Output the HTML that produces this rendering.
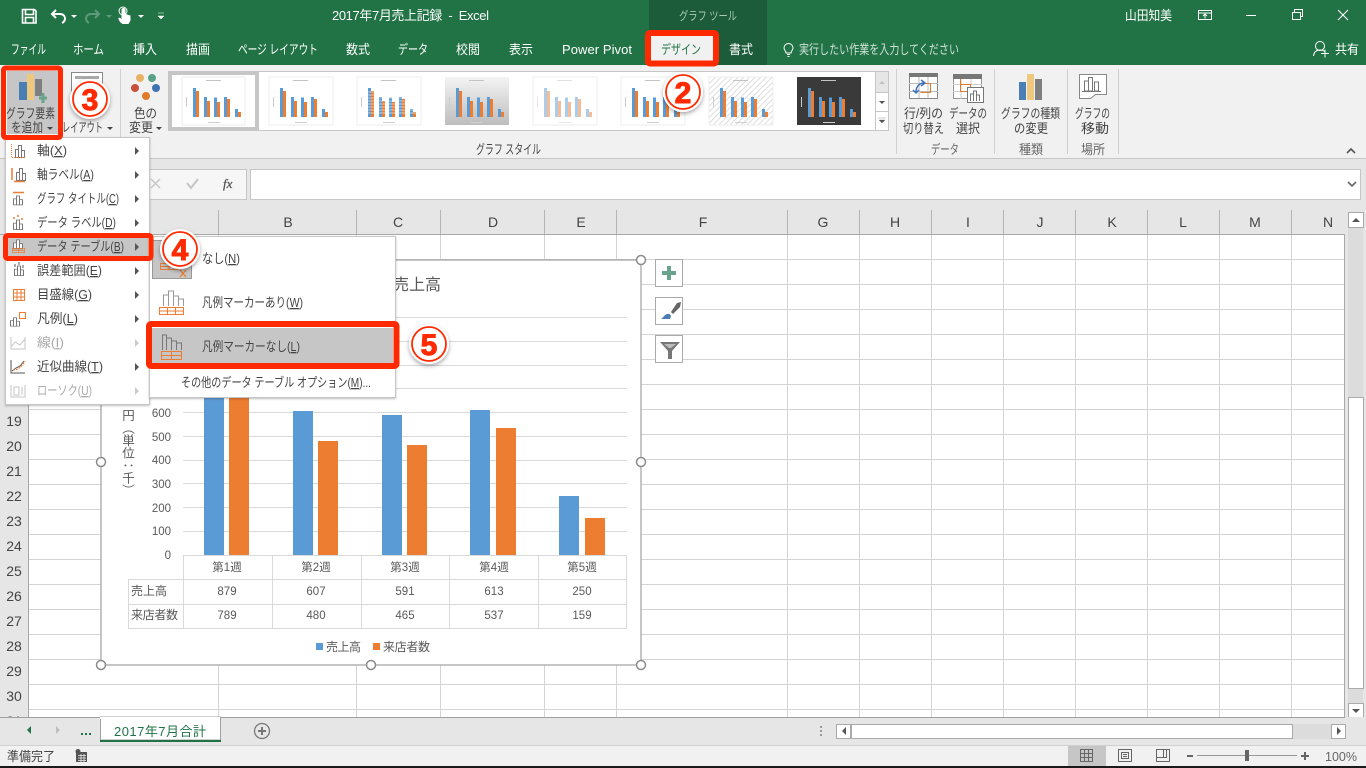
<!DOCTYPE html>
<html lang="ja"><head><meta charset="utf-8"><title>2017年7月売上記録 - Excel</title>
<style>
html,body{margin:0;padding:0;background:#fff;overflow:hidden}
svg{display:block;font-family:"Liberation Sans","Noto Sans CJK JP",sans-serif;font-size:13px}
.l{fill:#d4d4d4}
.t{fill:#444}
.w{fill:#fff}
.h{fill:#444;font-size:14px;text-anchor:middle}
.r{fill:#444;font-size:14px;text-anchor:middle}
.a{fill:#595959;font-size:11.500px;text-anchor:end}
.c{fill:#595959;font-size:11.500px;text-anchor:middle}
.d{fill:#aaa}
.u{text-decoration:underline}
</style></head><body>
<svg width="1366" height="768" viewBox="0 0 1366 768" xmlns="http://www.w3.org/2000/svg">
<defs>
<filter id="sh" x="-30%" y="-30%" width="160%" height="160%"><feDropShadow dx="0" dy="2" stdDeviation="2" flood-color="#000" flood-opacity=".35"/></filter>
<filter id="ms" x="-5%" y="-5%" width="110%" height="110%"><feDropShadow dx="0" dy="1" stdDeviation="1" flood-color="#000" flood-opacity=".25"/></filter>
<pattern id="hatch" width="4" height="4" patternUnits="userSpaceOnUse" patternTransform="rotate(45)"><rect width="1" height="4" fill="#ddd"/></pattern>
<linearGradient id="gr" x1="0" y1="0" x2="0" y2="1"><stop offset="0" stop-color="#f4f4f4"/><stop offset="1" stop-color="#bdbdbd"/></linearGradient>
<symbol id="bars" width="64" height="48" overflow="visible">
<g fill="#5b9bd5"><rect x="11" y="11" width="3" height="29"/><rect x="22" y="20" width="3" height="20"/><rect x="32" y="20.500" width="3" height="19.500"/><rect x="42" y="20" width="3" height="20"/><rect x="53" y="32" width="3" height="8"/></g>
<g fill="#ed7d31"><rect x="14" y="14" width="3" height="26"/><rect x="25" y="24" width="3" height="16"/><rect x="35" y="25" width="3" height="15"/><rect x="45" y="22" width="3" height="18"/><rect x="56" y="35" width="3" height="5"/></g>
<rect x="24" y="3" width="15" height="1" fill="#c4c4c4"/><rect x="26" y="45" width="12" height="1" fill="#d0d0d0"/>
<rect x="4" y="20" width="1" height="10" fill="#ccc"/>
</symbol>
<symbol id="mb" width="12" height="16" overflow="visible"><g fill="#fff" stroke="#777"><rect x=".5" y="6.500" width="3" height="8"/><rect x="3.500" y="2.500" width="3" height="12"/><rect x="6.500" y="7.500" width="3" height="7"/></g></symbol>
<symbol id="dt" width="18" height="7" overflow="visible"><g fill="none" stroke="#ed7d31"><rect x=".5" y=".5" width="17" height="6"/><path d="M0 3.500h18M9 .5v6"/></g></symbol>
</defs>

<!-- title bar -->
<rect width="1366" height="65" fill="#217346"/>
<rect x="649" width="118" height="65" fill="#1c5c3a"/>
<!-- QAT -->
<path d="M22.500 9.500h12l1.500 1.500v12h-13.500zM25.500 9.500v5h8v-5M25.500 23v-5.500h8V23" fill="none" stroke="#fff" stroke-width="1.600"/>
<path d="M56 10l-4 4 4 4M52 14h8c4 0 5 3 5 4.500s-1 3.500-3 4.500" fill="none" stroke="#fff" stroke-width="2"/>
<path d="M71 15h6l-3 3z" fill="#fff"/>
<path d="M95 10l4 4-4 4M99 14h-8c-4 0-5 3-5 4.500s1 3.500 3 4.500" fill="none" stroke="#5f9a7a" stroke-width="2"/>
<path d="M106 15h6l-3 3z" fill="#5f9a7a"/>
<path d="M120 22c-1-2-2-3-1.500-4s2 0 3 1v-9a2 2 0 0 1 4 0v4l5 1.500v5l-2 3.500h-6z" fill="#fff"/><circle cx="123" cy="11" r="4" fill="none" stroke="#fff"/>
<path d="M138 15h6l-3 3z" fill="#fff"/>
<path d="M158 13h6M158 16h6l-3 3z" fill="#fff" stroke="#fff" stroke-width=".5"/>

<text x="332" y="20" class="w" textLength="157">2017年7月売上記録&#160;&#160;-&#160;&#160;Excel</text>
<text x="679" y="20" fill="#a9c9b6" font-size="12" textLength="58" lengthAdjust="spacingAndGlyphs">グラフ ツール</text>
<text x="1125" y="20" class="w" textLength="47" lengthAdjust="spacingAndGlyphs">山田知美</text>
<!-- window controls -->
<path d="M1198.500 10.500h13v9h-13zM1198.500 13h13M1205 18.500v-4M1203 16l2-2 2 2" fill="none" stroke="#fff"/>
<path d="M1246 15.500h10" stroke="#fff"/>
<path d="M1292.500 12.500h8v7h-8zM1294.500 12v-2.500h8v7h-2" fill="none" stroke="#fff"/>
<path d="M1338 10l10 10M1348 10l-10 10" stroke="#fff" stroke-width="1.100"/>

<!-- tabs -->
<g class="w">
<text x="11" y="54" textLength="35" lengthAdjust="spacingAndGlyphs">ファイル</text>
<text x="73" y="54" textLength="31" lengthAdjust="spacingAndGlyphs">ホーム</text>
<text x="133" y="54" textLength="24" lengthAdjust="spacingAndGlyphs">挿入</text>
<text x="186" y="54" textLength="24" lengthAdjust="spacingAndGlyphs">描画</text>
<text x="238" y="54" textLength="80" lengthAdjust="spacingAndGlyphs">ページ レイアウト</text>
<text x="346" y="54" textLength="24" lengthAdjust="spacingAndGlyphs">数式</text>
<text x="398" y="54" textLength="30" lengthAdjust="spacingAndGlyphs">データ</text>
<text x="456" y="54" textLength="24" lengthAdjust="spacingAndGlyphs">校閲</text>
<text x="509" y="54" textLength="24" lengthAdjust="spacingAndGlyphs">表示</text>
<text x="562" y="54" textLength="70">Power Pivot</text>
<text x="729" y="54" textLength="24" lengthAdjust="spacingAndGlyphs">書式</text>
<text x="1335" y="54" textLength="24" lengthAdjust="spacingAndGlyphs">共有</text>
</g>
<text x="799" y="54" fill="#cfe0d6" textLength="160" lengthAdjust="spacingAndGlyphs">実行したい作業を入力してください</text>
<path d="M787 54.500h3M787.500 56.500h2M786 53c0-2-2-3-2-5a4.500 4.500 0 0 1 9 0c0 2-2 3-2 5z" fill="none" stroke="#fff"/>
<circle cx="1320" cy="46" r="4.500" fill="none" stroke="#fff"/><path d="M1313.500 56c.5-4 3-6 6.500-6s4 1 5 2M1321 53.500h8M1325 49.500v8" fill="none" stroke="#fff"/>

<!-- ribbon -->
<rect y="65" width="1366" height="93" fill="#f1f1f1"/>
<rect y="158" width="1366" height="1" fill="#c6c6c6"/>
<rect x="651" y="36" width="62" height="29" fill="#f1f1f1"/>
<text x="661" y="54" fill="#217346" textLength="40" lengthAdjust="spacingAndGlyphs">デザイン</text>

<!-- button 1 -->
<rect x="7" y="71" width="51" height="63" fill="#c6c6c6"/>
<rect x="19" y="82" width="8" height="18" fill="#4a7fb5"/>
<rect x="27" y="74" width="7" height="26" fill="#efc87f"/>
<rect x="35" y="79" width="7" height="17" fill="#7f7f7f"/>
<path d="M39 98h8M43 93v10" stroke="#6aa38c" stroke-width="3"/>
<text x="6" y="118" class="t" textLength="49" lengthAdjust="spacingAndGlyphs">グラフ要素</text>
<text x="11" y="132" class="t" textLength="32" lengthAdjust="spacingAndGlyphs">を追加</text>
<path d="M47 127h6l-3 3z" fill="#444"/>
<!-- button 2 -->
<rect x="71.500" y="72.500" width="31" height="30" fill="#fff" stroke="#888"/><rect x="75" y="76" width="24" height="3" fill="#aaa"/>
<text x="62" y="132" class="t" textLength="41" lengthAdjust="spacingAndGlyphs">レイアウト</text>
<path d="M107 127h6l-3 3z" fill="#444"/>
<rect x="120" y="69" width="1" height="85" fill="#d0d0d0"/>
<!-- colors -->
<circle cx="140" cy="78" r="4" fill="#e9b264"/><circle cx="152" cy="78" r="4" fill="#5ba08a"/><circle cx="135" cy="88" r="4" fill="#c9503a"/><circle cx="156" cy="88" r="4" fill="#3f72b5"/><circle cx="146" cy="96" r="4" fill="#e07b28"/>
<text x="134" y="118" class="t" textLength="23" lengthAdjust="spacingAndGlyphs">色の</text>
<text x="129" y="132" class="t" textLength="24" lengthAdjust="spacingAndGlyphs">変更</text>
<path d="M156 127h6l-3 3z" fill="#444"/>

<!-- gallery -->
<rect x="168.500" y="71.500" width="707" height="59" fill="#fff" stroke="#c6c6c6"/>
<rect x="170" y="73" width="87" height="56" fill="#fff" stroke="#c6c6c6" stroke-width="4"/>
<g stroke="#eee" fill="#fff"><rect x="182" y="77" width="63" height="48"/><rect x="269" y="77" width="64" height="48"/><rect x="357" y="77" width="64" height="48"/><rect x="533" y="77" width="64" height="48"/><rect x="621" y="77" width="64" height="48"/></g>
<use href="#bars" x="182" y="77"/>
<use href="#bars" x="269" y="77"/>
<use href="#bars" x="357" y="77"/>
<g stroke="#fff" stroke-width=".7" opacity=".7"><path d="M367 92h50M367 95h50M367 98h50M367 101h50M367 104h50M367 107h50M367 110h50M367 113h50"/></g>
<rect x="445" y="77" width="64" height="48" fill="url(#gr)"/>
<use href="#bars" x="445" y="77"/>
<use href="#bars" x="533" y="77" opacity=".5"/>
<use href="#bars" x="621" y="77"/>
<rect x="709" y="77" width="64" height="48" fill="url(#hatch)" stroke="#eee"/>
<use href="#bars" x="709" y="77"/>
<rect x="797" y="77" width="64" height="48" fill="#3a3a3a"/>
<use href="#bars" x="797" y="77"/>
<rect x="875.500" y="71.500" width="13" height="21" fill="#e6e6e6" stroke="#c6c6c6"/>
<rect x="875.500" y="92.500" width="13" height="19" fill="#fff" stroke="#c6c6c6"/>
<rect x="875.500" y="111.500" width="13" height="19" fill="#fff" stroke="#c6c6c6"/>
<path d="M879 84l3-3 3 3z" fill="#c0c0c0"/><path d="M879 101h6l-3 3z" fill="#555"/><path d="M878 118h8M879 120h6l-3 3z" fill="#555" stroke="#555" stroke-width=".3"/>
<text x="476" y="154" class="t" textLength="65" lengthAdjust="spacingAndGlyphs">グラフ スタイル</text>

<g fill="#d0d0d0"><rect x="896" y="69" width="1" height="85"/><rect x="994" y="69" width="1" height="85"/><rect x="1067" y="69" width="1" height="85"/><rect x="1118" y="69" width="1" height="85"/></g>

<!-- data icons -->
<rect x="909.500" y="73.500" width="28" height="25" fill="#fff" stroke="#888"/><rect x="909" y="73" width="29" height="4" fill="#777"/>
<path d="M909 83.500h29M909 91.500h29M919 77v21M928 77v21" stroke="#bbb" fill="none"/>
<path d="M920.500 83.500h10v9h-10" fill="none" stroke="#e07b28"/>
<path d="M916 92c0-5 3-9 8-9M921 80l4 3-4 3M913 90l3 3 3-3" fill="none" stroke="#3f72b5" stroke-width="1.500"/>
<rect x="953.500" y="74.500" width="28" height="24" fill="#fff" stroke="#999"/><rect x="953" y="74" width="29" height="5" fill="#777"/>
<path d="M953 84.500h29M953 91.500h29M961 79v20M971 79v20" stroke="#ccc" fill="none"/>
<path d="M960.500 79v12.500h10v-7h-10" fill="none" stroke="#e07b28"/>
<rect x="967.500" y="87.500" width="16" height="15" fill="#fff" stroke="#777"/>
<path d="M970.500 101v-7h3v7M973.500 101v-10h3v10M976.500 101v-6h3v6" fill="none" stroke="#777"/>
<rect x="1019" y="82" width="7" height="18" fill="#4a7fb5"/><rect x="1027" y="74" width="7" height="26" fill="#efc87f"/><rect x="1035" y="79" width="7" height="21" fill="#7f7f7f"/>
<path d="M1079.500 74.500h27v20h-11l-5 4h-11z" fill="#fff" stroke="#888"/>
<path d="M1084.500 91v-10h4v10zM1088.500 91V77.500h4V91zM1094.500 91v-9h4v9zM1082 91.500h19" fill="none" stroke="#777"/>

<g class="t">
<text x="904" y="118" textLength="39" lengthAdjust="spacingAndGlyphs">行/列の</text>
<text x="903" y="133" textLength="41" lengthAdjust="spacingAndGlyphs">切り替え</text>
<text x="949" y="118" textLength="38" lengthAdjust="spacingAndGlyphs">データの</text>
<text x="956" y="133" textLength="24" lengthAdjust="spacingAndGlyphs">選択</text>
<text x="1001" y="118" textLength="59" lengthAdjust="spacingAndGlyphs">グラフの種類</text>
<text x="1014" y="133" textLength="34" lengthAdjust="spacingAndGlyphs">の変更</text>
<text x="1075" y="118" textLength="35" lengthAdjust="spacingAndGlyphs">グラフの</text>
<text x="1081" y="133" textLength="28" lengthAdjust="spacingAndGlyphs">移動</text>
<text x="931" y="154" textLength="28" lengthAdjust="spacingAndGlyphs" fill="#666">データ</text>
<text x="1019" y="154" textLength="24" lengthAdjust="spacingAndGlyphs" fill="#666">種類</text>
<text x="1081" y="154" textLength="24" lengthAdjust="spacingAndGlyphs" fill="#666">場所</text>
</g>
<path d="M1347 153l4-4 4 4" fill="none" stroke="#555" stroke-width="1.600"/>

<!-- formula bar -->
<rect y="159" width="1366" height="51" fill="#e6e6e6"/>
<rect x="120.500" y="169.500" width="126" height="30" fill="#f6f6f6" stroke="#c6c6c6"/>
<rect x="250.500" y="169.500" width="1110" height="30" fill="#fff" stroke="#c6c6c6"/>
<path d="M151 179l9 9M160 179l-9 9" stroke="#c6c6c6" stroke-width="1.500"/>
<path d="M187 183l4 5 7-9" fill="none" stroke="#c6c6c6" stroke-width="2"/>
<text x="223" y="188" font-family="Liberation Serif" font-style="italic" font-size="13" fill="#555" stroke="#555" stroke-width=".3">fx</text>
<path d="M1348 182l4 4 4-4" fill="none" stroke="#666" stroke-width="1.600"/>

<!-- sheet -->
<rect y="210" width="1346" height="507" fill="#fff"/>
<rect y="210" width="1345" height="24" fill="#e6e6e6"/>
<rect y="234" width="28" height="483" fill="#e6e6e6"/>
<g class="l">
<rect x="29" y="259" width="1316" height="1"/><rect x="29" y="284" width="1316" height="1"/><rect x="29" y="309" width="1316" height="1"/><rect x="29" y="334" width="1316" height="1"/><rect x="29" y="359" width="1316" height="1"/><rect x="29" y="384" width="1316" height="1"/><rect x="29" y="409" width="1316" height="1"/><rect x="29" y="434" width="1316" height="1"/><rect x="29" y="459" width="1316" height="1"/><rect x="29" y="484" width="1316" height="1"/><rect x="29" y="509" width="1316" height="1"/><rect x="29" y="534" width="1316" height="1"/><rect x="29" y="559" width="1316" height="1"/><rect x="29" y="584" width="1316" height="1"/><rect x="29" y="609" width="1316" height="1"/><rect x="29" y="634" width="1316" height="1"/><rect x="29" y="659" width="1316" height="1"/><rect x="29" y="684" width="1316" height="1"/><rect x="29" y="709" width="1316" height="1"/>
<rect x="218" y="234" width="1" height="483"/><rect x="356" y="234" width="1" height="483"/><rect x="440" y="234" width="1" height="483"/><rect x="544" y="234" width="1" height="483"/><rect x="616" y="234" width="1" height="483"/><rect x="787" y="234" width="1" height="483"/><rect x="859" y="234" width="1" height="483"/><rect x="931" y="234" width="1" height="483"/><rect x="1003" y="234" width="1" height="483"/><rect x="1075" y="234" width="1" height="483"/><rect x="1147" y="234" width="1" height="483"/><rect x="1219" y="234" width="1" height="483"/><rect x="1291" y="234" width="1" height="483"/>
</g>
<g fill="#b5b5b5">
<rect x="218" y="210" width="1" height="24"/><rect x="356" y="210" width="1" height="24"/><rect x="440" y="210" width="1" height="24"/><rect x="544" y="210" width="1" height="24"/><rect x="616" y="210" width="1" height="24"/><rect x="787" y="210" width="1" height="24"/><rect x="859" y="210" width="1" height="24"/><rect x="931" y="210" width="1" height="24"/><rect x="1003" y="210" width="1" height="24"/><rect x="1075" y="210" width="1" height="24"/><rect x="1147" y="210" width="1" height="24"/><rect x="1219" y="210" width="1" height="24"/><rect x="1291" y="210" width="1" height="24"/>
</g>
<rect y="234" width="1345" height="1" fill="#a8a8a8"/><rect x="28" y="210" width="1" height="507" fill="#a8a8a8"/><rect x="1344" y="234" width="1" height="483" fill="#a8a8a8"/>
<g class="h">
<text x="288" y="227">B</text><text x="398" y="227">C</text><text x="493" y="227">D</text><text x="581" y="227">E</text><text x="703" y="227">F</text><text x="823" y="227">G</text><text x="895" y="227">H</text><text x="968" y="227">I</text><text x="1040" y="227">J</text><text x="1112" y="227">K</text><text x="1183" y="227">L</text><text x="1255" y="227">M</text><text x="1328" y="227">N</text>
</g>
<g class="r">
<text x="14" y="426">19</text><text x="14" y="451">20</text><text x="14" y="476">21</text><text x="14" y="501">22</text><text x="14" y="526">23</text><text x="14" y="551">24</text><text x="14" y="576">25</text><text x="14" y="601">26</text><text x="14" y="626">27</text><text x="14" y="651">28</text><text x="14" y="676">29</text><text x="14" y="701">30</text><text x="14" y="726">31</text>
</g>

<!-- vertical scrollbar -->
<rect x="1345" y="210" width="21" height="507" fill="#e6e6e6"/>
<rect x="1348" y="212" width="15" height="505" fill="#dcdcdc"/>
<rect x="1348.500" y="212.500" width="15" height="15" fill="#fff" stroke="#aaa"/><path d="M1352 222l4-4 4 4z" fill="#555"/>
<rect x="1348.500" y="397.500" width="15" height="291" fill="#fff" stroke="#aaa"/>
<rect x="1348.500" y="703.500" width="15" height="14" fill="#fff" stroke="#aaa"/><path d="M1352 709h8l-4 4z" fill="#555"/>

<!-- chart -->
<rect x="101" y="260" width="540" height="405" fill="#fff" stroke="#a0a0a0" stroke-width="1.200"/>
<text x="441" y="290" text-anchor="end" font-size="16" fill="#595959">2017年7月売上高</text>
<g fill="#d9d9d9">
<rect x="183" y="317" width="444" height="1"/><rect x="183" y="341" width="444" height="1"/><rect x="183" y="365" width="444" height="1"/><rect x="183" y="388" width="444" height="1"/><rect x="183" y="412" width="444" height="1"/><rect x="183" y="436" width="444" height="1"/><rect x="183" y="460" width="444" height="1"/><rect x="183" y="483" width="444" height="1"/><rect x="183" y="507" width="444" height="1"/><rect x="183" y="531" width="444" height="1"/>
</g>
<g fill="#5b9bd5"><rect x="204" y="347" width="20" height="208"/><rect x="293" y="411" width="20" height="144"/><rect x="382" y="415" width="20" height="140"/><rect x="470" y="410" width="20" height="145"/><rect x="559" y="496" width="20" height="59"/></g>
<g fill="#ed7d31"><rect x="229" y="368" width="20" height="187"/><rect x="318" y="441" width="20" height="114"/><rect x="407" y="445" width="20" height="110"/><rect x="496" y="428" width="20" height="127"/><rect x="585" y="518" width="20" height="37"/></g>
<g class="a"><text x="171" y="417">600</text><text x="171" y="441">500</text><text x="171" y="464">400</text><text x="171" y="488">300</text><text x="171" y="512">200</text><text x="171" y="535">100</text><text x="171" y="559">0</text></g>
<text x="127" y="409" font-size="12.500" fill="#595959" style="writing-mode:vertical-rl;glyph-orientation-vertical:0">円（単位：千）</text>
<!-- data table -->
<g fill="none" stroke="#d9d9d9"><path d="M183 555.500h444M128 579.500h499M128 604.500h499M128 628.500h499M128.500 580v49M183.500 555v74M272.500 555v74M361.500 555v74M449.500 555v74M538.500 555v74M626.500 555v74"/></g>
<g class="c">
<text x="227" y="571">第1週</text><text x="316" y="571">第2週</text><text x="405" y="571">第3週</text><text x="494" y="571">第4週</text><text x="582" y="571">第5週</text>
<text x="227" y="595">879</text><text x="316" y="595">607</text><text x="405" y="595">591</text><text x="494" y="595">613</text><text x="582" y="595">250</text>
<text x="227" y="619">789</text><text x="316" y="619">480</text><text x="405" y="619">465</text><text x="494" y="619">537</text><text x="582" y="619">159</text>
</g>
<text x="131" y="595" font-size="12" fill="#595959" textLength="36">売上高</text>
<text x="131" y="619" font-size="12" fill="#595959" textLength="47">来店者数</text>
<rect x="316" y="643" width="7" height="7" fill="#5b9bd5"/><text x="326" y="651" font-size="12" fill="#595959" textLength="35">売上高</text>
<rect x="373" y="643" width="7" height="7" fill="#ed7d31"/><text x="383" y="651" font-size="12" fill="#595959" textLength="47">来店者数</text>
<g fill="#fff" stroke="#8c8c8c" stroke-width="1.500"><circle cx="641" cy="260" r="4.500"/><circle cx="101" cy="462" r="4.500"/><circle cx="641" cy="462" r="4.500"/><circle cx="101" cy="665" r="4.500"/><circle cx="371" cy="665" r="4.500"/><circle cx="641" cy="665" r="4.500"/></g>
<!-- chart side buttons -->
<g fill="#fff" stroke="#aaa"><rect x="655.500" y="259.500" width="27" height="27"/><rect x="655.500" y="297.500" width="27" height="27"/><rect x="655.500" y="335.500" width="27" height="27"/></g>
<path d="M662 273h14M669 266v14" stroke="#6aa38c" stroke-width="4"/>
<path d="M671 312l6-9 4-1-1 5-7 7z" fill="#666"/><path d="M661 319c2-1 3-4 6-5 2-1 4 1 4 2l-1 3z" fill="#4a7fb5"/>
<path d="M660 342h20l-8 9v8h-4v-8z" fill="#777"/><path d="M664 344h12l-5 4h-2z" fill="#bbb"/>

<!-- tab bar -->
<rect y="717" width="1366" height="28" fill="#e6e6e6"/>
<rect y="717" width="1345" height="1" fill="#a0a0a0"/>
<rect x="100.500" y="717" width="120" height="23" fill="#fff" stroke="#a0a0a0"/>
<rect x="100" y="717" width="120" height="2" fill="#fff"/>
<rect x="100" y="740" width="121" height="2" fill="#217346"/>
<text x="114" y="736" font-size="13" fill="#217346" textLength="92">2017年7月合計</text>
<path d="M31 726v8l-4-4z" fill="#217346"/><path d="M56 726v8l4-4z" fill="#c0c0c0"/>
<g fill="#217346"><rect x="81" y="733" width="2" height="2"/><rect x="85" y="733" width="2" height="2"/><rect x="89" y="733" width="2" height="2"/></g>
<circle cx="262" cy="731" r="7.500" fill="none" stroke="#777" stroke-width="1.300"/><path d="M258 731h8M262 727v8" stroke="#777" stroke-width="2"/>
<g fill="#999"><rect x="820" y="726" width="2" height="2"/><rect x="820" y="730" width="2" height="2"/><rect x="820" y="734" width="2" height="2"/></g>
<rect x="836" y="724" width="495" height="15" fill="#dcdcdc"/>
<rect x="836.500" y="724.500" width="14" height="14" fill="#fff" stroke="#aaa"/><path d="M846 727v8l-4-4z" fill="#555"/>
<rect x="851.500" y="724.500" width="441" height="14" fill="#fff" stroke="#aaa"/>
<rect x="1331.500" y="724.500" width="14" height="14" fill="#fff" stroke="#aaa"/><path d="M1337 727v8l4-4z" fill="#555"/>

<!-- status bar -->
<rect y="745" width="1366" height="1" fill="#d0d0d0"/>
<rect y="746" width="1366" height="20" fill="#f1f1f1"/>
<rect y="766" width="1366" height="2" fill="#1a1a1a"/>
<text x="7" y="761" class="t" textLength="48" lengthAdjust="spacingAndGlyphs">準備完了</text>
<rect x="76" y="752" width="11" height="10" fill="#555"/><circle cx="78" cy="751.500" r="2.500" fill="#555"/><path d="M78 755.500h8M78 758h8M78 760.500h8M81 754v8M84 754v8" stroke="#eee" stroke-width=".8"/>
<rect x="1068" y="746" width="38" height="20" fill="#c6c6c6"/>
<path d="M1080.500 749.500h12v12h-12zM1080.500 753.500h12M1080.500 757.500h12M1084.500 749.500v12M1088.500 749.500v12" fill="none" stroke="#666"/>
<path d="M1118.500 749.500h13v12h-13zM1121.500 752.500h7v6h-7zM1123 754.500h4M1123 756.500h4" fill="none" stroke="#666"/>
<path d="M1156.500 749.500h13v12h-13zM1156.500 757.500h7v-8M1166.500 749.500v8h-3" fill="none" stroke="#666"/>
<rect x="1187" y="755" width="6" height="2" fill="#666"/>
<rect x="1197" y="755" width="100" height="1" fill="#999"/>
<rect x="1245" y="750" width="4" height="11" fill="#666"/>
<path d="M1301 756h8M1305 752v8" stroke="#666" stroke-width="2"/>
<text x="1325" y="761" font-size="12.500" fill="#666" textLength="32">100%</text>

<!-- dropdown menu -->
<rect x="5.500" y="137.500" width="144" height="267" fill="#fff" stroke="#c6c6c6" filter="url(#ms)"/>
<rect x="8" y="238" width="140" height="18" fill="#c6c6c6"/>
<g class="t">
<text x="37" y="155" textLength="30" lengthAdjust="spacingAndGlyphs">軸(<tspan class="u">X</tspan>)</text>
<text x="37" y="179" textLength="57" lengthAdjust="spacingAndGlyphs">軸ラベル(<tspan class="u">A</tspan>)</text>
<text x="37" y="203" textLength="82" lengthAdjust="spacingAndGlyphs">グラフ タイトル(<tspan class="u">C</tspan>)</text>
<text x="37" y="227" textLength="79" lengthAdjust="spacingAndGlyphs">データ ラベル(<tspan class="u">D</tspan>)</text>
<text x="37" y="251" textLength="87" lengthAdjust="spacingAndGlyphs">データ テーブル(<tspan class="u">B</tspan>)</text>
<text x="37" y="275" textLength="65" lengthAdjust="spacingAndGlyphs">誤差範囲(<tspan class="u">E</tspan>)</text>
<text x="37" y="299" textLength="55" lengthAdjust="spacingAndGlyphs">目盛線(<tspan class="u">G</tspan>)</text>
<text x="37" y="323" textLength="41" lengthAdjust="spacingAndGlyphs">凡例(<tspan class="u">L</tspan>)</text>
<text x="37" y="371" textLength="66" lengthAdjust="spacingAndGlyphs">近似曲線(<tspan class="u">T</tspan>)</text>
</g>
<g class="d">
<text x="37" y="347" textLength="27" lengthAdjust="spacingAndGlyphs">線(<tspan class="u">I</tspan>)</text>
<text x="37" y="395" textLength="55" lengthAdjust="spacingAndGlyphs">ローソク(<tspan class="u">U</tspan>)</text>
</g>
<g fill="#555"><path d="M135 147l4 4-4 4zM135 171l4 4-4 4zM135 195l4 4-4 4zM135 219l4 4-4 4zM135 243l4 4-4 4zM135 267l4 4-4 4zM135 291l4 4-4 4zM135 315l4 4-4 4zM135 363l4 4-4 4z"/></g>
<path d="M135 339l4 4-4 4zM135 387l4 4-4 4z" fill="#ccc"/>
<!-- menu icons -->
<use href="#mb" x="15" y="143"/><path d="M11.500 144v13.500h14" fill="none" stroke="#ed7d31" stroke-dasharray="1 1"/>
<use href="#mb" x="16" y="166"/><path d="M12 168v12M14 181.500h11" stroke="#ed7d31" stroke-width="1.500"/>
<g transform="translate(13 194) scale(1 .75)"><use href="#mb"/></g><path d="M13 192.500h11" stroke="#ed7d31" stroke-width="1.500"/>
<g transform="translate(13 218) scale(1 .8)"><use href="#mb"/></g><path d="M14 217v2M18 215v2M22 218v2" stroke="#ed7d31" stroke-width="1.500"/>
<g transform="translate(13 238) scale(1 .75)"><use href="#mb"/></g><g transform="translate(12 248) scale(.72)"><use href="#dt"/></g>
<g transform="translate(14 264) scale(1 .8)"><use href="#mb"/></g><path d="M15 264v3M19 262v3M23 265v3" stroke="#555"/>
<path d="M13.500 289.500h11v11h-11zM13.500 293h11M13.500 297h11M17 289v12M21 289v12" fill="none" stroke="#ed7d31"/>
<g transform="translate(10 316) scale(1 .7)"><use href="#mb"/></g><rect x="19.500" y="312.500" width="6" height="6" fill="#fff" stroke="#ed7d31"/>
<path d="M11 337v12h14v-12M11 347l4-5 5 3 5-6" fill="none" stroke="#c6c6c6"/>
<path d="M11 360v13h14M12 371l4-3 4-2 4-5" fill="none" stroke="#555"/><path d="M13 370c5 0 9-3 12-9" fill="none" stroke="#ed7d31" stroke-dasharray="2 1"/>
<path d="M11 385v12h14v-12M14 387v8h5v-8zM22 387v8" fill="none" stroke="#c6c6c6"/>

<!-- submenu -->
<rect x="149.500" y="236.500" width="246" height="161" fill="#fff" stroke="#c6c6c6" filter="url(#ms)"/>
<rect x="152.500" y="240.500" width="39" height="38" fill="#c6c6c6" stroke="#999"/>
<use href="#dt" x="160" y="263"/>
<path d="M180 270l6 7M186 270l-6 7" stroke="#ed7d31" stroke-width="1.300"/>
<path d="M163.500 306v-11h5v11M168.500 306v-15h5v15M173.500 306v-10h5v10M178.500 306v-7h5v7" fill="#fff" stroke="#999"/>
<path d="M159.500 307.500h24v7h-24zM159.500 311h24M167.500 307v7M175.500 307v7" fill="none" stroke="#ed7d31"/>
<rect x="152" y="328" width="241" height="36" fill="#c6c6c6"/>
<path d="M162.500 350v-15h4v15M166.500 350v-12h5v12M171.500 350v-9h5v9M176.500 350v-7h5v7" fill="none" stroke="#777"/>
<path d="M161.500 351.500h20v8h-20zM161.500 355.500h20M171.500 351v8" fill="none" stroke="#ed7d31"/>
<g class="t">
<text x="202" y="263" textLength="38" lengthAdjust="spacingAndGlyphs">なし(<tspan class="u">N</tspan>)</text>
<text x="202" y="307" textLength="101" lengthAdjust="spacingAndGlyphs">凡例マーカーあり(<tspan class="u">W</tspan>)</text>
<text x="202" y="351" textLength="98" lengthAdjust="spacingAndGlyphs">凡例マーカーなし(<tspan class="u">L</tspan>)</text>
<text x="181" y="387" textLength="190" lengthAdjust="spacingAndGlyphs">その他のデータ テーブル オプション(<tspan class="u">M</tspan>)...</text>
</g>

<!-- red highlights -->
<g fill="none" stroke="#ff2a00">
<rect x="3.500" y="68" width="57" height="69.500" rx="2" stroke-width="5"/>
<rect x="648" y="33" width="68" height="30.500" rx="2" stroke-width="6"/>
<rect x="5.500" y="235.500" width="145.500" height="23" rx="2" stroke-width="5"/>
<rect x="149" y="324" width="247.500" height="42" rx="2" stroke-width="6"/>
</g>

<!-- numbers -->
<g filter="url(#sh)">
<circle cx="683" cy="92" r="20" fill="#fff"/><circle cx="683" cy="92" r="17" fill="#fff" stroke="#ff2a00" stroke-width="1.800"/>
<circle cx="90" cy="99" r="20" fill="#fff"/><circle cx="90" cy="99" r="17" fill="#fff" stroke="#ff2a00" stroke-width="1.800"/>
<circle cx="180" cy="249" r="20" fill="#fff"/><circle cx="180" cy="249" r="17" fill="#fff" stroke="#ff2a00" stroke-width="1.800"/>
<circle cx="429" cy="344" r="20" fill="#fff"/><circle cx="429" cy="344" r="17" fill="#fff" stroke="#ff2a00" stroke-width="1.800"/>
</g>
<g fill="#ff2a00" stroke="#ff2a00" stroke-width="1" font-size="30" font-weight="bold" text-anchor="middle">
<text x="683" y="103">2</text><text x="90" y="110">3</text><text x="180" y="260">4</text><text x="429" y="355">5</text>
</g>
</svg>
</body></html>
